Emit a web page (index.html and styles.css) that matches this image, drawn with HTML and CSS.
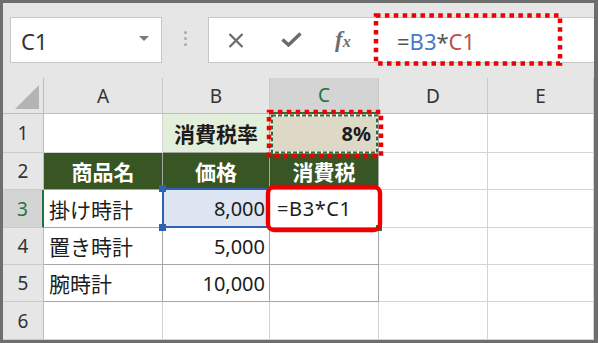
FILE: index.html
```html
<!DOCTYPE html>
<html lang="ja">
<head>
<meta charset="utf-8">
<title>Excel 数式</title>
<link rel="stylesheet" href="styles.css">
</head>
<body>
<div class="frame">
  <div class="toolbar">
    <div class="namebox"><span class="name">C1</span><span class="caret"></span></div>
    <div class="sep"><i></i><i></i><i></i></div>
    <div class="fbox">
      <svg class="ico ico-x" width="16" height="15" viewBox="0 0 16 15"><path d="M1.5 1 L14.5 14 M14.5 1 L1.5 14" stroke="#6b6b6b" stroke-width="2.2" fill="none"/></svg>
      <svg class="ico ico-ok" width="21" height="15" viewBox="0 0 21 15"><path d="M1.5 7.5 L7.5 13 L19.5 1.5" stroke="#6b6b6b" stroke-width="3.4" fill="none"/></svg>
      <span class="ico-fx"><i>f</i><i class="fx-x">x</i></span>
      <span class="ftext"><span class="f-op">=</span><span class="f-b">B3</span><span class="f-op">*</span><span class="f-c">C1</span></span>
      <svg class="fdots" width="200" height="60" viewBox="0 0 200 60"><rect x="7" y="5.5" width="184" height="48" fill="none" stroke="#ee0000" stroke-width="4.5" stroke-dasharray="4.5 4.4"/></svg>
    </div>
  </div>
  <div class="grid">
    <div class="corner"><svg width="24" height="24" viewBox="0 0 24 24"><polygon points="0,24 24,24 24,0" fill="#b4b4b4"/></svg></div>
    <div class="ch">A</div>
    <div class="ch">B</div>
    <div class="ch ch-active">C</div>
    <div class="ch">D</div>
    <div class="ch">E</div>

    <div class="rh">1</div>
    <div class="c"></div>
    <div class="c tb b1 jp bold center">消費税率</div>
    <div class="c tb c1 bold num pct">8%
      <svg class="c1-mark" width="121" height="51" viewBox="0 0 121 51">
        <rect x="8" y="7.5" width="105" height="37" fill="none" stroke="#ffffff" stroke-width="2"/>
        <rect x="8" y="7.5" width="105" height="37" fill="none" stroke="#2e6a3c" stroke-width="2" stroke-dasharray="4 2"/>
        <rect x="5" y="4" width="112" height="44" fill="none" stroke="#ee0000" stroke-width="4.5" stroke-dasharray="4.5 4.4"/>
      </svg>
    </div>
    <div class="c"></div>
    <div class="c"></div>

    <div class="rh">2</div>
    <div class="c tb hd jp bold center">商品名</div>
    <div class="c tb hd jp bold center">価格</div>
    <div class="c tb hd jp bold center">消費税</div>
    <div class="c"></div>
    <div class="c"></div>

    <div class="rh rh-active">3</div>
    <div class="c tb jp left">掛け時計</div>
    <div class="c tb num sel">8,000<span class="sel-box"></span><span class="handle h-top"></span><span class="handle h-bot"></span></div>
    <div class="c tb left editing"><span class="edit-text">=B3*C1</span><span class="fill-handle"></span>
      <svg class="c3-mark" width="124" height="55" viewBox="0 0 124 55"><rect x="6" y="6" width="112" height="43" rx="6" ry="6" fill="none" stroke="#ee0000" stroke-width="4.4"/></svg>
    </div>
    <div class="c"></div>
    <div class="c"></div>

    <div class="rh">4</div>
    <div class="c tb jp left">置き時計</div>
    <div class="c tb num">5,000</div>
    <div class="c tb"></div>
    <div class="c"></div>
    <div class="c"></div>

    <div class="rh">5</div>
    <div class="c tb jp left">腕時計</div>
    <div class="c tb num">10,000</div>
    <div class="c tb"></div>
    <div class="c"></div>
    <div class="c"></div>

    <div class="rh">6</div>
    <div class="c"></div>
    <div class="c"></div>
    <div class="c"></div>
    <div class="c"></div>
    <div class="c"></div>
  </div>
</div>
</body>
</html>
```
FILE: styles.css
```css
* {
  box-sizing: border-box;
  margin: 0;
  padding: 0;
}

body {
  margin: 0;
  width: 598px;
  height: 343px;
  overflow: hidden;
  font-family: "Noto Sans", "Noto Sans CJK JP", sans-serif;
  background: #ffffff;
}

.frame {
  width: 598px;
  height: 343px;
  border: 3px solid #6e6e6e;
  border-right-width: 4px;
  background: #e6e6e6;
  display: flex;
  flex-direction: column;
}

/* ---------- formula bar ---------- */
.toolbar {
  height: 75px;
  flex: none;
  display: flex;
  align-items: flex-start;
  padding: 14px 0 0 7px;
}

.namebox {
  width: 152px;
  height: 46px;
  background: #ffffff;
  border: 1px solid #c6c6c6;
  display: flex;
  align-items: center;
  justify-content: space-between;
  padding: 0 12px 0 10px;
}

.name {
  font-size: 22px;
  color: #333333;
  line-height: 1;
  margin-top: 2px;
}

.caret {
  width: 0;
  height: 0;
  border-left: 5px solid transparent;
  border-right: 5px solid transparent;
  border-top: 5px solid #7a7a7a;
  margin-top: -3px;
}

.sep {
  width: 46px;
  height: 46px;
  display: flex;
  flex-direction: column;
  align-items: center;
  justify-content: center;
  gap: 3px;
  padding-bottom: 4px;
}

.sep i {
  width: 3px;
  height: 3px;
  border-radius: 50%;
  background: #aaaaaa;
}

.fbox {
  flex: 1;
  height: 46px;
  background: #ffffff;
  border: 1px solid #c6c6c6;
  border-right: 0;
  position: relative;
  display: flex;
  align-items: center;
  padding-left: 19px;
}

.ico {
  flex: none;
  display: block;
}

.ico-ok {
  margin-left: 37px;
  margin-top: -1px;
}

.ico-fx {
  margin-left: 33px;
  font-family: "Liberation Serif", serif;
  font-weight: bold;
  color: #6e6e6e;
  font-size: 23px;
  line-height: 1;
  width: 18px;
  white-space: nowrap;
  margin-top: -2px;
}

.ico-fx i {
  font-style: italic;
}

.fx-x {
  font-size: 16px;
}

.ftext {
  margin-left: 44px;
  font-size: 22px;
  line-height: 1;
  margin-top: 1px;
  white-space: nowrap;
}

.f-op {
  color: #555555;
}

.f-b {
  color: #4a78c8;
}

.f-c {
  color: #b9524e;
}

.fdots {
  position: absolute;
  left: 160px;
  top: -8px;
  overflow: visible;
}

/* ---------- grid ---------- */
.grid {
  flex: 1;
  display: grid;
  grid-template-columns: 41px 119px 107px 109px 109px 1fr;
  grid-template-rows: 36px 39px 37px 38px 37px 37px 38px;
  background: #ffffff;
}

.corner {
  background: #e6e6e6;
  border-right: 1px solid #bdbdbd;
  border-bottom: 1px solid #bdbdbd;
  display: flex;
  align-items: flex-end;
  justify-content: flex-end;
  padding: 0 4px 4px 0;
}

.corner svg {
  display: block;
}

.ch {
  background: #e6e6e6;
  border-right: 1px solid #cacaca;
  border-bottom: 1px solid #bdbdbd;
  display: flex;
  align-items: center;
  justify-content: center;
  font-size: 19px;
  color: #333333;
}

.ch-active {
  background: #d4d4d4;
  color: #217346;
  border-bottom: 2px solid #217346;
}

.rh {
  background: #e6e6e6;
  border-right: 1px solid #bdbdbd;
  border-bottom: 1px solid #cacaca;
  display: flex;
  align-items: center;
  justify-content: center;
  font-size: 19px;
  color: #333333;
}

.rh-active {
  background: #d4d4d4;
  color: #217346;
  border-right: 2px solid #217346;
}

.c {
  position: relative;
  border-right: 1px solid #d4d4d4;
  border-bottom: 1px solid #d4d4d4;
  display: flex;
  align-items: center;
  font-size: 20px;
  color: #1c1c1c;
  white-space: nowrap;
}

.c.tb {
  border-right-color: #a6a6a6;
  border-bottom-color: #a6a6a6;
}

.jp {
  font-size: 21px;
  font-family: "Noto Sans CJK JP", sans-serif;
}

.bold {
  font-weight: bold;
}

.center {
  justify-content: center;
}

.left {
  justify-content: flex-start;
  padding-left: 5px;
}

.num {
  justify-content: flex-end;
  padding-right: 4px;
}

.pct {
  padding-right: 7px;
}

.b1 {
  background: #e2efda;
}

.c1 {
  background: #ddd9c6;
}

.hd {
  background: #375623;
  color: #ffffff;
}

.c1-mark {
  position: absolute;
  left: -6px;
  top: -6px;
  overflow: visible;
  z-index: 3;
}

.sel {
  background: #dde6f2;
}

.sel-box {
  position: absolute;
  left: -1px;
  top: -2px;
  right: -1px;
  bottom: -1px;
  border: 2px solid #2f62b2;
}

.handle {
  position: absolute;
  left: -4px;
  width: 7px;
  height: 7px;
  background: #2f62b2;
  z-index: 2;
}

.h-top {
  top: -5px;
}

.h-bot {
  bottom: -4px;
}

.editing {
  padding-left: 7px;
}

.edit-text {
  font-size: 20px;
  letter-spacing: 0.6px;
}

.fill-handle {
  position: absolute;
  right: -4px;
  bottom: -4px;
  width: 6px;
  height: 6px;
  background: #217346;
  z-index: 1;
}

.c3-mark {
  position: absolute;
  left: -8px;
  top: -9px;
  overflow: visible;
  z-index: 3;
}
```
